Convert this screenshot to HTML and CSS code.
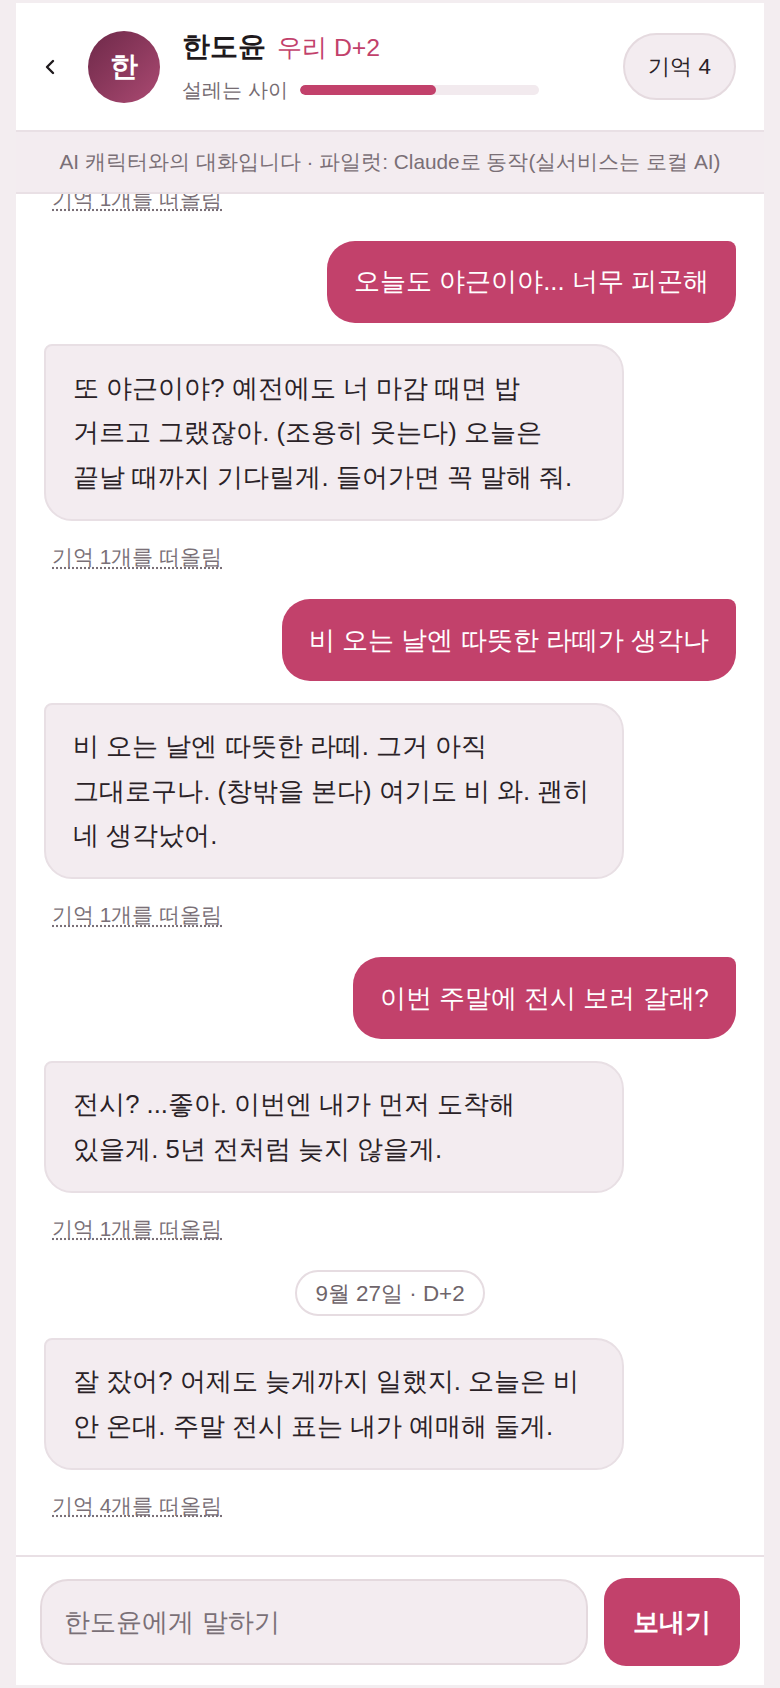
FILE: index.html
```html
<!DOCTYPE html>
<html lang="ko">
<head>
<meta charset="utf-8">
<title>한도윤</title>
<link rel="stylesheet" href="styles.css">
</head>
<body>
<div class="app">
  <header class="header">
    <button class="back" aria-label="뒤로">
      <svg width="10" height="16" viewBox="0 0 10 16"><polyline points="8,2 2,8 8,14" fill="none" stroke="#1f1a1d" stroke-width="2.4" stroke-linecap="round" stroke-linejoin="round"/></svg>
    </button>
    <div class="avatar">한</div>
    <div class="who">
      <div class="name-row"><span class="name">한도윤</span><span class="dday">우리 D+2</span></div>
      <div class="status-row"><span class="status">설레는 사이</span><div class="bar"><div class="bar-fill" style="width:57%"></div></div></div>
    </div>
    <button class="mem-btn">기억 4</button>
  </header>
  <div class="notice">AI 캐릭터와의 대화입니다 · 파일럿: Claude로 동작(실서비스는 로컬 AI)</div>
  <main class="chat">
    <div class="thread">
      <div class="ai">
        <div class="bubble ai-bubble">하루 종일 바빴지? 무리하지 마.</div>
        <a class="mem">기억 1개를 떠올림</a>
      </div>
      <div class="bubble me">오늘도 야근이야... 너무 피곤해</div>
      <div class="ai">
        <div class="bubble ai-bubble">또 야근이야? 예전에도 너 마감 때면 밥 거르고 그랬잖아. (조용히 웃는다) 오늘은 끝날 때까지 기다릴게. 들어가면 꼭 말해 줘.</div>
        <a class="mem">기억 1개를 떠올림</a>
      </div>
      <div class="bubble me">비 오는 날엔 따뜻한 라떼가 생각나</div>
      <div class="ai">
        <div class="bubble ai-bubble">비 오는 날엔 따뜻한 라떼. 그거 아직 그대로구나. (창밖을 본다) 여기도 비 와. 괜히 네 생각났어.</div>
        <a class="mem">기억 1개를 떠올림</a>
      </div>
      <div class="bubble me">이번 주말에 전시 보러 갈래?</div>
      <div class="ai">
        <div class="bubble ai-bubble">전시? ...좋아. 이번엔 내가 먼저 도착해 있을게. 5년 전처럼 늦지 않을게.</div>
        <a class="mem">기억 1개를 떠올림</a>
      </div>
      <div class="date">9월 27일 · D+2</div>
      <div class="ai">
        <div class="bubble ai-bubble">잘 잤어? 어제도 늦게까지 일했지. 오늘은 비 안 온대. 주말 전시 표는 내가 예매해 둘게.</div>
        <a class="mem">기억 4개를 떠올림</a>
      </div>
    </div>
  </main>
  <footer class="composer">
    <input class="input" type="text" placeholder="한도윤에게 말하기">
    <button class="send">보내기</button>
  </footer>
</div>
</body>
</html>
```

FILE: styles.css
```css
* { box-sizing: border-box; }
html, body { margin: 0; padding: 0; }
body {
  background: #f3edf0;
  font-family: "Liberation Sans", sans-serif;
  color: #2a2227;
}
.app {
  width: 748px;
  height: 1682px;
  margin: 3px auto;
  background: #fff;
  display: flex;
  flex-direction: column;
}
.header {
  height: 129px;
  flex: none;
  display: flex;
  align-items: center;
  padding: 0 28px;
  border-bottom: 2px solid #e9e0e5;
}
.back {
  border: 0;
  background: none;
  padding: 0;
  width: 12px;
  height: 30px;
  display: flex;
  align-items: center;
  justify-content: center;
  margin-right: 32px;
}
.avatar {
  width: 72px;
  height: 72px;
  border-radius: 50%;
  background: linear-gradient(135deg, #6e2949 0%, #8c395d 50%, #ab4a72 100%);
  color: #fff;
  font-size: 28px;
  font-weight: 700;
  display: flex;
  align-items: center;
  justify-content: center;
  flex: none;
}
.who {
  flex: 1;
  margin-left: 22px;
  display: flex;
  flex-direction: column;
  gap: 10px;
}
.name-row { display: flex; align-items: baseline; gap: 11px; line-height: 36px; }
.name { font-size: 28px; font-weight: 700; color: #1f1a1d; }
.dday { font-size: 24.8px; color: #c2416b; }
.status-row { display: flex; align-items: center; gap: 12px; line-height: 28px; }
.status { font-size: 20px; color: #766c72; }
.bar {
  width: 239px;
  height: 10px;
  border-radius: 5px;
  background: #f2eaee;
  overflow: hidden;
}
.bar-fill { height: 100%; background: #c2416b; border-radius: 5px; }
.mem-btn {
  flex: none;
  width: 113px;
  height: 67px;
  border-radius: 34px;
  border: 2px solid #e5dadf;
  background: #f3ecf0;
  font-family: inherit;
  font-size: 22.4px;
  color: #2a2227;
  padding: 0;
}
.notice {
  flex: none;
  height: 62px;
  background: #f3ecf0;
  border-bottom: 2px solid #e9e0e5;
  display: flex;
  align-items: center;
  justify-content: center;
  font-size: 20.8px;
  color: #7a6f76;
}
.chat {
  flex: 1;
  min-height: 0;
  overflow: hidden;
  display: flex;
  flex-direction: column;
  justify-content: flex-end;
}
.thread {
  display: flex;
  flex-direction: column;
  gap: 21.5px;
  padding: 0 28px 29px;
}
.bubble {
  font-size: 25.6px;
  line-height: 44.8px;
  word-break: keep-all;
}
.me {
  align-self: flex-end;
  background: #c2416b;
  color: #fff;
  padding: 18.7px 27.2px;
  border-radius: 28px 8px 28px 28px;
}
.ai { display: flex; flex-direction: column; align-items: flex-start; }
.ai-bubble {
  max-width: 580px;
  background: #f3ecf0;
  border: 2px solid #e8dfe4;
  border-radius: 8px 28px 28px 28px;
  padding: 19.2px 27.2px;
  color: #2a2227;
}
.mem {
  margin: 20px 0 0 8px;
  padding-bottom: 5px;
  font-size: 20.8px;
  line-height: 31.2px;
  color: #7a7077;
  text-decoration: underline dotted;
  text-underline-offset: 3px;
}
.date {
  align-self: center;
  height: 46px;
  width: 190px;
  border: 2px solid #e6dce1;
  border-radius: 23px;
  display: flex;
  align-items: center;
  justify-content: center;
  font-size: 22.4px;
  color: #6f656b;
}
.composer {
  flex: none;
  height: 130px;
  border-top: 2px solid #e9e0e5;
  display: flex;
  align-items: center;
  gap: 16px;
  padding: 2px 24px 0;
}
.input {
  flex: 1;
  height: 86px;
  border-radius: 28px;
  border: 2px solid #e4d9de;
  background: #f3ecf0;
  font-family: inherit;
  font-size: 25.6px;
  padding: 0 22.4px;
  color: #2a2227;
  outline: none;
}
.input::placeholder { color: #7a7077; }
.send {
  flex: none;
  width: 136px;
  height: 88px;
  border: 0;
  border-radius: 22px;
  background: #c2416b;
  color: #fff;
  font-family: inherit;
  font-size: 25.6px;
  font-weight: 700;
}
```
